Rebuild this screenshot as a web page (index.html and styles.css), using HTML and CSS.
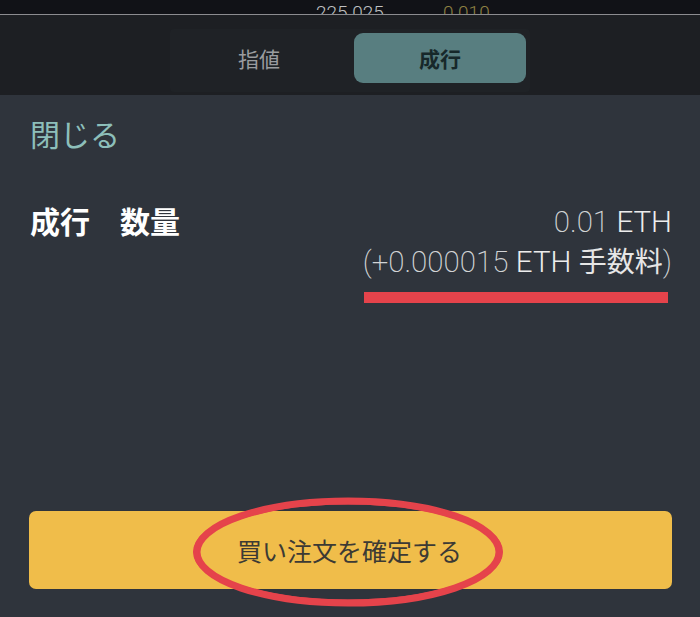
FILE: index.html
```html
<!DOCTYPE html>
<html lang="ja">
<head>
<meta charset="utf-8">
<title>成行 注文確認</title>
<link rel="stylesheet" href="styles.css">
</head>
<body>
<div class="top-strip">
  <span class="price">225.025</span>
  <span class="size">0.010</span>
</div>
<div class="tab-bar">
  <div class="tab-group">
    <div class="tab">指値</div>
    <div class="tab tab-active">成行</div>
  </div>
</div>
<main class="sheet">
  <div class="close">閉じる</div>
  <div class="qty-row">
    <div class="qty-label">成行　数量</div>
    <div class="qty-values">
      <div class="line"><span class="num">0.01</span> <span class="unit">ETH</span></div>
      <div class="line"><span class="num">(+0.000015</span> <span class="unit">ETH</span> <span class="fee">手数料</span><span class="num">)</span></div>
      <div class="underline-mark"></div>
    </div>
  </div>
  <button class="confirm">
    <span class="confirm-text">買い注文を確定する</span>
    <svg class="circle-mark" width="330" height="122" viewBox="0 0 330 122">
      <ellipse cx="165" cy="61" rx="151" ry="51" fill="none" stroke="#e5434b" stroke-width="7"/>
      <ellipse cx="165" cy="61" rx="152.5" ry="50" fill="none" stroke="#e5434b" stroke-width="5"/>
    </svg>
  </button>
</main>
</body>
</html>
```

FILE: styles.css
```css
html, body {
  margin: 0;
  padding: 0;
}

body {
  width: 700px;
  height: 617px;
  overflow: hidden;
  background: #2f343c;
  font-family: "Noto Sans CJK JP", "Noto Sans", sans-serif;
}

.top-strip {
  height: 15px;
  overflow: hidden;
  background: #111217;
  display: flex;
  padding-left: 316px;
  padding-top: 3px;
  box-sizing: border-box;
  font-family: Roboto, "Liberation Sans", sans-serif;
  font-weight: 300;
  font-size: 19px;
  line-height: 20px;
  border-bottom: 1px solid #8c8c90;
}

.price {
  width: 127px;
  color: #bfc0c2;
}

.size {
  color: #8f8243;
}

.tab-bar {
  height: 80px;
  background: #1d1f23;
  display: flex;
  justify-content: center;
  align-items: flex-start;
  padding-top: 14px;
  box-sizing: border-box;
}

.tab-group {
  display: flex;
  gap: 8px;
  padding: 4px 4px 9px 2px;
  background: #1f2226;
  border-radius: 4px;
}

.tab {
  width: 174px;
  height: 50px;
  display: flex;
  align-items: center;
  justify-content: center;
  font-size: 21px;
  color: #9a9c9f;
  border-radius: 9px;
}

.tab-active {
  width: 172px;
  background: #587e80;
  color: #17282a;
  font-weight: 700;
}

.sheet {
  height: 522px;
  display: flex;
  flex-direction: column;
  padding: 0 28px 28px 30px;
  box-sizing: border-box;
}

.close {
  margin-top: 23px;
  font-size: 30px;
  line-height: 30px;
  color: #8dbfba;
}

.qty-row {
  margin-top: 55px;
  display: flex;
  justify-content: space-between;
  align-items: flex-start;
}

.qty-label {
  font-size: 30px;
  line-height: 38px;
  font-weight: 700;
  color: #ffffff;
  margin-top: -2px;
}

.qty-values {
  display: flex;
  flex-direction: column;
  align-items: flex-end;
  font-family: Roboto, "Noto Sans CJK JP", sans-serif;
  font-size: 29.5px;
  line-height: 38px;
  color: #d9dadc;
}

.line {
  white-space: nowrap;
}

.num {
  font-weight: 200;
  color: #d2d4d6;
}

.unit {
  font-weight: 300;
  color: #ededed;
}

.fee {
  font-family: "Noto Sans CJK JP", sans-serif;
  font-weight: 400;
  font-size: 28px;
  color: #e6e6e6;
}

.underline-mark {
  width: 304px;
  height: 11px;
  margin-top: 11px;
  margin-right: 4px;
  background: #e5434b;
}

.confirm {
  position: relative;
  margin-top: auto;
  margin-left: -1px;
  height: 78px;
  border: none;
  border-radius: 7px;
  background: #f0bd4a;
  display: flex;
  align-items: center;
  justify-content: center;
  padding: 0;
  font-family: "Noto Sans CJK JP", sans-serif;
  font-size: 25px;
  color: #3c3a34;
}

.confirm-text {
  line-height: 1;
  margin-left: -2px;
}

.circle-mark {
  position: absolute;
  left: 154px;
  top: -20px;
  pointer-events: none;
}
```
